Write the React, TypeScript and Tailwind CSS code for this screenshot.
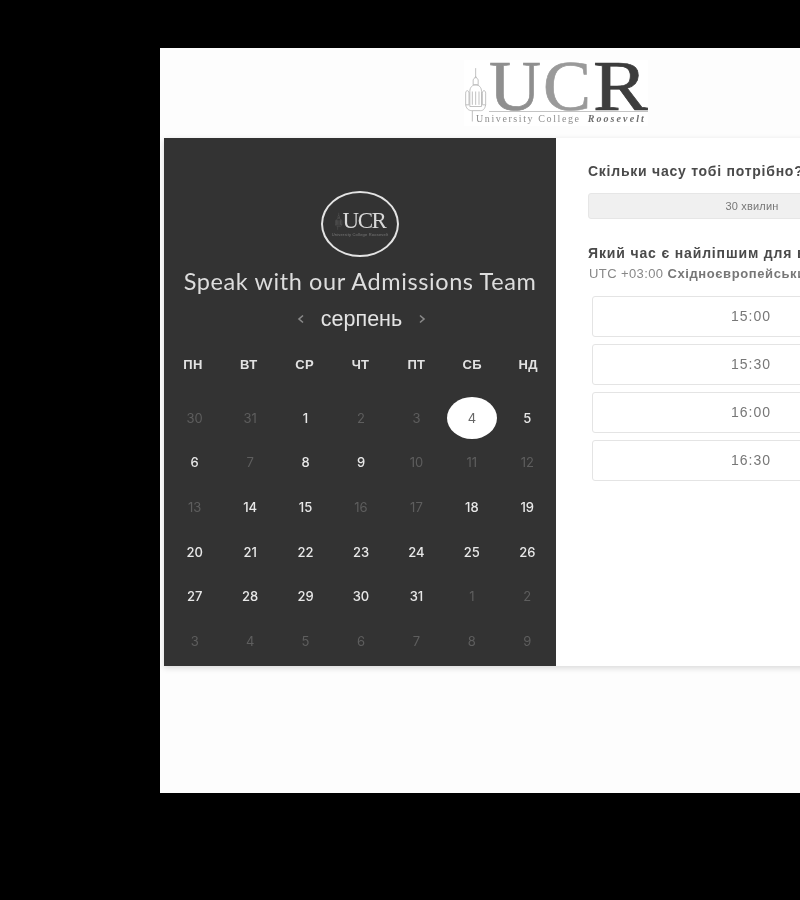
import React from 'react'

const weekDays = ['пн', 'вт', 'ср', 'чт', 'пт', 'сб', 'нд']

// [day, enabled]
const days: [number, boolean][] = [
  [30, false], [31, false], [1, true], [2, false], [3, false], [4, true], [5, true],
  [6, true], [7, false], [8, true], [9, true], [10, false], [11, false], [12, false],
  [13, false], [14, true], [15, true], [16, false], [17, false], [18, true], [19, true],
  [20, true], [21, true], [22, true], [23, true], [24, true], [25, true], [26, true],
  [27, true], [28, true], [29, true], [30, true], [31, true], [1, false], [2, false],
  [3, false], [4, false], [5, false], [6, false], [7, false], [8, false], [9, false],
]

const times = ['15:00', '15:30', '16:00', '16:30']

function Tower({ className, stroke }: { className: string; stroke: string }) {
  return (
    <svg className={className} viewBox="0 0 30 66" fill="none" stroke={stroke} strokeWidth="1">
      <path d="M14 2v12M11 16l3-4 3 4v6h-6zM7 30c0-5 3-8 7-8s7 3 7 8v18H7z" />
      <path d="M2 32c0-4 4-4 4 0v14H2zM22 32c0-4 4-4 4 0v14h-4zM10 30v16M14 30v16M18 30v16" />
      <path d="M2 46c1 6 5 7 8 7v13M26 46c-1 5-3 7-6 7h-10" />
    </svg>
  )
}

function BigLogo() {
  return (
    <div className="flex w-[184px] h-[66px] bg-white">
      <Tower className="w-[25px] h-[62px] mt-[3px] shrink-0" stroke="#b5b5b5" />
      <div className="flex flex-col">
        <div className="flex h-[51px] items-start pt-[1px] font-['Liberation_Serif',serif] text-[72px] leading-[50px] tracking-[3px] [-webkit-text-stroke:0.7px]">
          <span className="text-[#8f8f8f]">U</span>
          <span className="text-[#9a9a9a] -ml-[1px]">C</span>
          <span className="inline-block origin-left scale-x-[1.14] text-[#3d3d3d] -ml-[1px]">R</span>
        </div>
        <div className="h-px w-[159px] bg-[#c4c4c4]" />
        <div className="-ml-[13px] mt-[1px] flex items-baseline gap-[7px] whitespace-nowrap font-['Liberation_Serif',serif] text-[10px] leading-[12px] text-[#8e8e8e]">
          <span className="tracking-[1.6px]">University College</span>
          <span className="italic font-bold tracking-[2.1px] text-[#6e6e6e]">Roosevelt</span>
        </div>
      </div>
    </div>
  )
}

function SmallLogo() {
  return (
    <div className="flex items-center justify-center w-[78px] h-[66px] rounded-[50%] border-[2.5px] border-[#e4e4e4]">
      <div className="flex flex-col items-center">
        <div className="flex items-center h-[20px]">
          <Tower className="w-[8px] h-[18px]" stroke="#777777" />
          <span className="font-['Liberation_Serif',serif] text-[23px] leading-[20px] tracking-[-1.5px] text-[#d8d8d8]">UCR</span>
        </div>
        <div className="mt-[1px] h-[5px] font-['Liberation_Sans',sans-serif] text-[4px] leading-[5px] tracking-[0.2px] whitespace-nowrap text-[#7a7a7a]">
          University College Roosevelt
        </div>
      </div>
    </div>
  )
}

function Calendar() {
  return (
    <div className="w-[392px] shrink-0 bg-[#333333] pt-[53px] font-['Inter',sans-serif]">
      <div className="flex justify-center">
        <SmallLogo />
      </div>
      <div className="mt-[9px] text-center font-['Lato',sans-serif] text-[23.5px] leading-[30px] tracking-[0.6px] text-[#dddddd] whitespace-nowrap">
        Speak with our Admissions Team
      </div>
      <div className="mt-[8px] flex items-center justify-center h-[30px] pl-[3px] text-[#e4e4e4]">
        <svg className="w-[8px] h-[10px]" viewBox="0 0 8 10" fill="none" stroke="#8a8a8a" strokeWidth="1.6">
          <path d="M6 1.5 2 5l4 3.5" />
        </svg>
        <span className="mx-[16px] font-['Liberation_Sans',sans-serif] text-[21.5px] leading-[26px]">серпень</span>
        <svg className="w-[8px] h-[10px]" viewBox="0 0 8 10" fill="none" stroke="#8a8a8a" strokeWidth="1.6">
          <path d="M2 1.5 6 5 2 8.5" />
        </svg>
      </div>
      <div className="mt-[15px] grid grid-cols-7 pl-[1px] h-[32px] items-center">
        {weekDays.map((d) => (
          <div key={d} className="text-center font-['Liberation_Sans',sans-serif] text-[13px] font-bold uppercase tracking-[0.3px] text-[#e2e2e2]">
            {d}
          </div>
        ))}
      </div>
      <div className="mt-[15px] grid grid-cols-7 pl-[3px] pr-[1px] auto-rows-[44.7px]">
        {days.map(([day, on], i) =>
          i === 5 ? (
            <div key={i} className="flex items-center justify-center">
              <div className="flex items-center justify-center w-[50px] h-[42px] rounded-[50%] bg-white text-[13px] text-[#666666]">
                {day}
              </div>
            </div>
          ) : (
            <div
              key={i}
              className={`flex items-center justify-center text-[13px] ${on ? 'font-medium text-[#e8e8e8]' : 'text-[#5e5e5e]'}`}
            >
              {day}
            </div>
          ),
        )}
      </div>
    </div>
  )
}

function Booking() {
  return (
    <div className="w-[396px] shrink-0 bg-white pt-[24px] pl-[32px] font-['Liberation_Sans',sans-serif]">
      <div className="text-[14px] leading-[18px] font-bold tracking-[0.75px] text-[#4a4a4a] whitespace-nowrap">
        Скільки часу тобі потрібно?
      </div>
      <div className="mt-[13px] flex items-center justify-center w-[328px] h-[26px] rounded-[3px] border border-[#e6e6e6] bg-[#f0f0f0] text-[11px] tracking-[0.2px] text-[#777777]">
        30 хвилин
      </div>
      <div className="mt-[25px] text-[14px] leading-[18px] font-bold tracking-[0.85px] text-[#4a4a4a] whitespace-nowrap">
        Який час є найліпшим для вас?
      </div>
      <div className="mt-[3px] pl-[1px] text-[13px] leading-[18px] tracking-[0.4px] text-[#888888] whitespace-nowrap">
        UTC +03:00 <span className="font-bold tracking-[0.6px] text-[#777777]">Східноєвропейський час</span>
      </div>
      <div className="mt-[13px] ml-[4px] flex w-[318px] flex-col gap-[7px]">
        {times.map((t) => (
          <div
            key={t}
            className="flex items-center justify-center h-[41px] rounded-[3px] border border-[#e4e4e4] bg-white text-[14px] tracking-[1px] text-[#777777]"
          >
            {t}
          </div>
        ))}
      </div>
    </div>
  )
}

export default function App() {
  return (
    <div className="h-[900px] w-[800px] overflow-hidden bg-black pt-[48px] pl-[160px]">
      <div className="h-[745px] w-[792px] bg-[#fdfdfd] pt-[12px] pl-[4px] blur-[0.4px]">
        <div className="flex justify-center pr-[4px] h-[78px]">
          <BigLogo />
        </div>
        <div className="flex h-[528px] w-[788px] shadow-[0_2px_6px_rgba(0,0,0,0.15)]">
          <Calendar />
          <Booking />
        </div>
      </div>
    </div>
  )
}
